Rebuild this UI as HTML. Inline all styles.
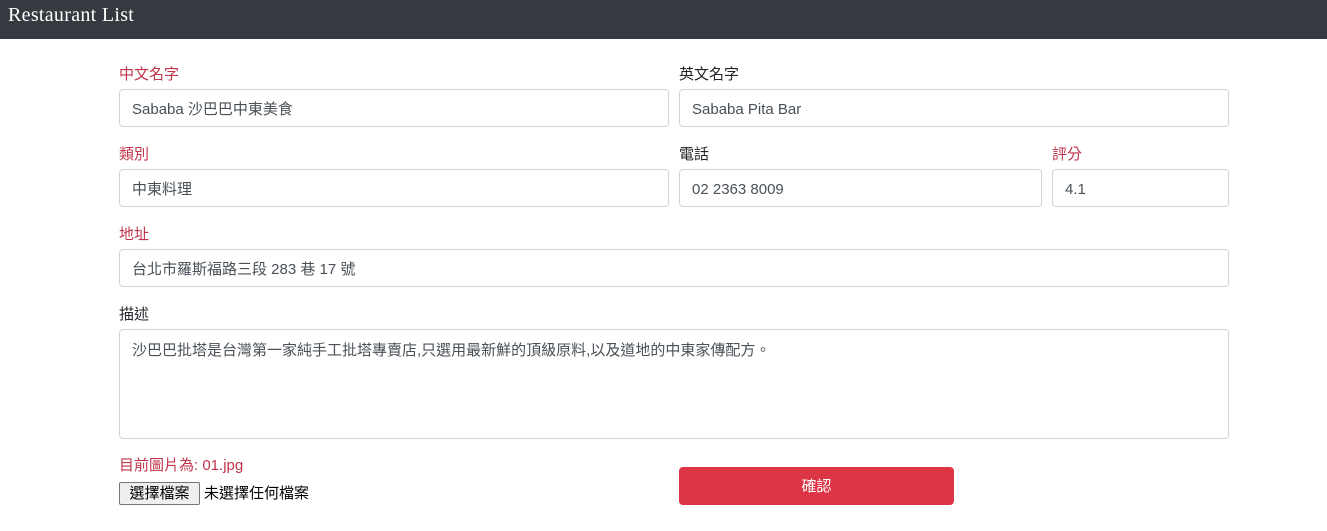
<!DOCTYPE html>
<html><head><meta charset="utf-8"><style>
*{box-sizing:border-box;margin:0;padding:0}
body{width:1327px;height:531px;background:#fff;font-family:"Liberation Sans","Noto Sans CJK TC",sans-serif;font-size:15px;color:#212529;position:relative;overflow:hidden}
.nav{position:absolute;left:0;top:0;width:1327px;height:39px;background:#343a40}
.nav span{position:absolute;left:8px;top:4px;color:#fff;font-family:"Liberation Serif",serif;font-size:20px;letter-spacing:0.3px}
.l{position:absolute;font-size:15px;line-height:20px}
.r{color:#c0334a}
.i{position:absolute;border:1px solid #ced4da;border-radius:4px;height:38px;padding:2px 12px 0;line-height:36px;color:#495057;font-size:15px}
</style></head><body>
<div class="nav"><span>Restaurant List</span></div>
<div class="l r" style="left:119px;top:65px">中文名字</div>
<div class="i" style="left:119px;top:89px;width:550px">Sababa 沙巴巴中東美食</div>
<div class="l" style="left:679px;top:65px">英文名字</div>
<div class="i" style="left:679px;top:89px;width:550px">Sababa Pita Bar</div>
<div class="l r" style="left:119px;top:145px">類別</div>
<div class="i" style="left:119px;top:169px;width:550px">中東料理</div>
<div class="l" style="left:679px;top:145px">電話</div>
<div class="i" style="left:679px;top:169px;width:363px">02 2363 8009</div>
<div class="l r" style="left:1052px;top:145px">評分</div>
<div class="i" style="left:1052px;top:169px;width:177px">4.1</div>
<div class="l r" style="left:119px;top:225px">地址</div>
<div class="i" style="left:119px;top:249px;width:1110px">台北市羅斯福路三段 283 巷 17 號</div>
<div class="l" style="left:119px;top:305px">描述</div>
<div class="i" style="left:119px;top:329px;width:1110px;height:110px;line-height:22px;padding-top:10px">沙巴巴批塔是台灣第一家純手工批塔專賣店,只選用最新鮮的頂級原料,以及道地的中東家傳配方。</div>
<div class="l r" style="left:119px;top:456px">目前圖片為: 01.jpg</div>
<div style="position:absolute;left:119px;top:482px;width:81px;height:23px;border:1px solid #767676;background:#efefef;font-size:15px;line-height:21px;text-align:center;color:#000;border-radius:2px">選擇檔案</div>
<div class="l" style="left:204px;top:484px;color:#000">未選擇任何檔案</div>
<div style="position:absolute;left:679px;top:467px;width:275px;height:38px;background:#dc3545;border-radius:4px;color:#fff;text-align:center;line-height:40px">確認</div>
</body></html>
